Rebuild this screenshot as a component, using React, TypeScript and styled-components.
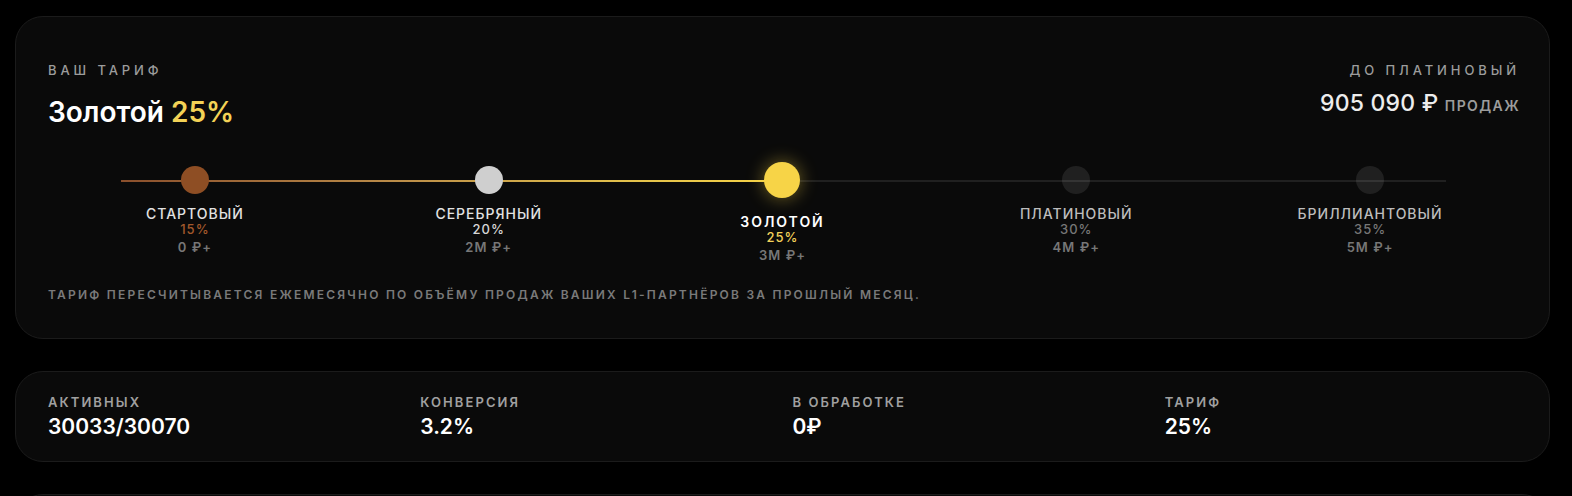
import React from 'react';
import styled, { createGlobalStyle, css } from 'styled-components';

const GlobalStyle = createGlobalStyle`
  html, body {
    margin: 0;
    background: #000;
  }

  body {
    font-family: Inter, 'Noto Sans', 'Liberation Sans', sans-serif;
    color: #fff;
    -webkit-font-smoothing: antialiased;
  }
`;

type Tone = 'bronze' | 'silver' | 'gold' | 'locked';

interface Tier {
  name: string;
  percent: string;
  min: string;
  tone: Tone;
}

const tiers: Tier[] = [
  { name: 'Стартовый', percent: '15%', min: '0 ₽+', tone: 'bronze' },
  { name: 'Серебряный', percent: '20%', min: '2M ₽+', tone: 'silver' },
  { name: 'Золотой', percent: '25%', min: '3M ₽+', tone: 'gold' },
  { name: 'Платиновый', percent: '30%', min: '4M ₽+', tone: 'locked' },
  { name: 'Бриллиантовый', percent: '35%', min: '5M ₽+', tone: 'locked' },
];

const stats = [
  { label: 'Активных', value: '30033/30070' },
  { label: 'Конверсия', value: '3.2%' },
  { label: 'В обработке', value: '0₽' },
  { label: 'Тариф', value: '25%' },
];

const dotColor: Record<Tone, string> = {
  bronze: '#8e4e24',
  silver: '#cfcfcf',
  gold: '#f7d447',
  locked: 'rgba(255, 255, 255, 0.09)',
};

const percentColor: Record<Tone, string> = {
  bronze: '#a3592c',
  silver: '#d6d6d6',
  gold: '#f3d25a',
  locked: '#777',
};

const nameColor: Record<Tone, string> = {
  bronze: '#e2e2e2',
  silver: '#e2e2e2',
  gold: '#fff',
  locked: '#bdbdbd',
};

const App = () => {
  return (
    <>
      <GlobalStyle />
      <Page>
        <TierCard>
          <Header>
            <div>
              <Caption>Ваш тариф</Caption>
              <Title>
                Золотой <Accent>25%</Accent>
              </Title>
            </div>
            <NextTier>
              <Caption>До Платиновый</Caption>
              <Remaining>
                905 090 ₽ <Unit>продаж</Unit>
              </Remaining>
            </NextTier>
          </Header>

          <Steps>
            <Track>
              <TrackFill />
            </Track>
            {tiers.map((tier) => (
              <Step key={tier.name}>
                <DotSlot>
                  <Dot tone={tier.tone} />
                </DotSlot>
                <StepName tone={tier.tone}>{tier.name}</StepName>
                <StepPercent tone={tier.tone}>{tier.percent}</StepPercent>
                <StepMin>{tier.min}</StepMin>
              </Step>
            ))}
          </Steps>

          <Note>
            Тариф пересчитывается ежемесячно по объёму продаж ваших L1-партнёров за прошлый месяц.
          </Note>
        </TierCard>

        <StatsCard>
          {stats.map((stat) => (
            <Stat key={stat.label}>
              <StatLabel>{stat.label}</StatLabel>
              <StatValue>{stat.value}</StatValue>
            </Stat>
          ))}
        </StatsCard>

        <EmptyCard />
      </Page>
    </>
  );
};

const Page = styled.div`
  display: flex;
  flex-direction: column;
  gap: 32px;
  padding: 16px 22px 0 15px;
  height: 496px;
  box-sizing: border-box;
  overflow: hidden;
`;

const Card = styled.section`
  background: #0a0a0a;
  border: 1px solid #1b1b1b;
  border-radius: 28px;
  box-sizing: border-box;
`;

const TierCard = styled(Card)`
  padding: 45px 32px 36px;
`;

const Header = styled.div`
  display: flex;
  justify-content: space-between;
  align-items: flex-start;
`;

const Caption = styled.div`
  font-size: 13px;
  line-height: 16px;
  font-weight: 500;
  letter-spacing: 0.3em;
  text-transform: uppercase;
  color: #9c9c9c;
`;

const Title = styled.div`
  margin-top: 17px;
  font-size: 28px;
  line-height: 34px;
  font-weight: 600;
  color: #fff;
`;

const Accent = styled.span`
  color: #f3d256;
`;

const NextTier = styled.div`
  display: flex;
  flex-direction: column;
  align-items: flex-end;
  margin-right: -3px;
`;

const Remaining = styled.div`
  margin-top: 11px;
  font-size: 23px;
  line-height: 28px;
  font-weight: 500;
  letter-spacing: 0.01em;
  color: #ededed;
`;

const Unit = styled.span`
  font-size: 14px;
  font-weight: 600;
  letter-spacing: 0.1em;
  text-transform: uppercase;
  color: #9c9c9c;
`;

const Steps = styled.div`
  position: relative;
  display: grid;
  grid-template-columns: repeat(5, 1fr);
  margin-top: 33px;
`;

const Track = styled.div`
  position: absolute;
  top: 18px;
  left: 73px;
  right: 71px;
  height: 1.5px;
  background: #202020;
`;

const TrackFill = styled.div`
  width: 50%;
  height: 100%;
  background: linear-gradient(90deg, #8a4f2c 0%, #b98a48 40%, #e2c04c 75%, #f7d447 100%);
`;

const Step = styled.div`
  position: relative;
  display: flex;
  flex-direction: column;
  align-items: center;
  text-align: center;
`;

const DotSlot = styled.div`
  display: flex;
  align-items: center;
  justify-content: center;
  height: 36px;
`;

const Dot = styled.div<{ tone: Tone }>`
  width: 28px;
  height: 28px;
  border-radius: 50%;
  background: ${({ tone }) => dotColor[tone]};

  ${({ tone }) =>
    tone === 'gold' &&
    css`
      width: 36px;
      height: 36px;
      box-shadow: 0 0 18px rgba(247, 212, 71, 0.45);
    `}
`;

const StepName = styled.div<{ tone: Tone }>`
  margin-top: 7px;
  font-size: 14px;
  line-height: 17px;
  font-weight: 500;
  letter-spacing: 0.07em;
  text-transform: uppercase;
  color: ${({ tone }) => nameColor[tone]};

  ${({ tone }) =>
    tone === 'gold' &&
    css`
      margin-top: 15px;
      font-weight: 600;
      letter-spacing: 0.14em;
    `}
`;

const StepPercent = styled.div<{ tone: Tone }>`
  font-size: 13px;
  line-height: 15px;
  font-weight: 500;
  letter-spacing: 0.08em;
  color: ${({ tone }) => percentColor[tone]};
`;

const StepMin = styled.div`
  margin-top: 2px;
  font-size: 13px;
  line-height: 16px;
  font-weight: 600;
  letter-spacing: 0.08em;
  color: #777;
`;

const Note = styled.p`
  margin: 25px 0 0;
  font-size: 12px;
  line-height: 14px;
  font-weight: 600;
  letter-spacing: 0.185em;
  text-transform: uppercase;
  color: #7a7a7a;
`;

const StatsCard = styled(Card)`
  display: grid;
  grid-template-columns: repeat(4, 1fr);
  gap: 20px;
  padding: 22px 32px 21px;
`;

const Stat = styled.div`
  display: flex;
  flex-direction: column;
  gap: 4px;
`;

const StatLabel = styled.div`
  font-size: 13px;
  line-height: 16px;
  font-weight: 600;
  letter-spacing: 0.16em;
  text-transform: uppercase;
  color: #a0a0a0;
`;

const StatValue = styled.div`
  font-size: 21px;
  line-height: 26px;
  font-weight: 600;
  color: #fff;
`;

const EmptyCard = styled(Card)`
  flex-shrink: 0;
  height: 120px;
`;

export default App;
